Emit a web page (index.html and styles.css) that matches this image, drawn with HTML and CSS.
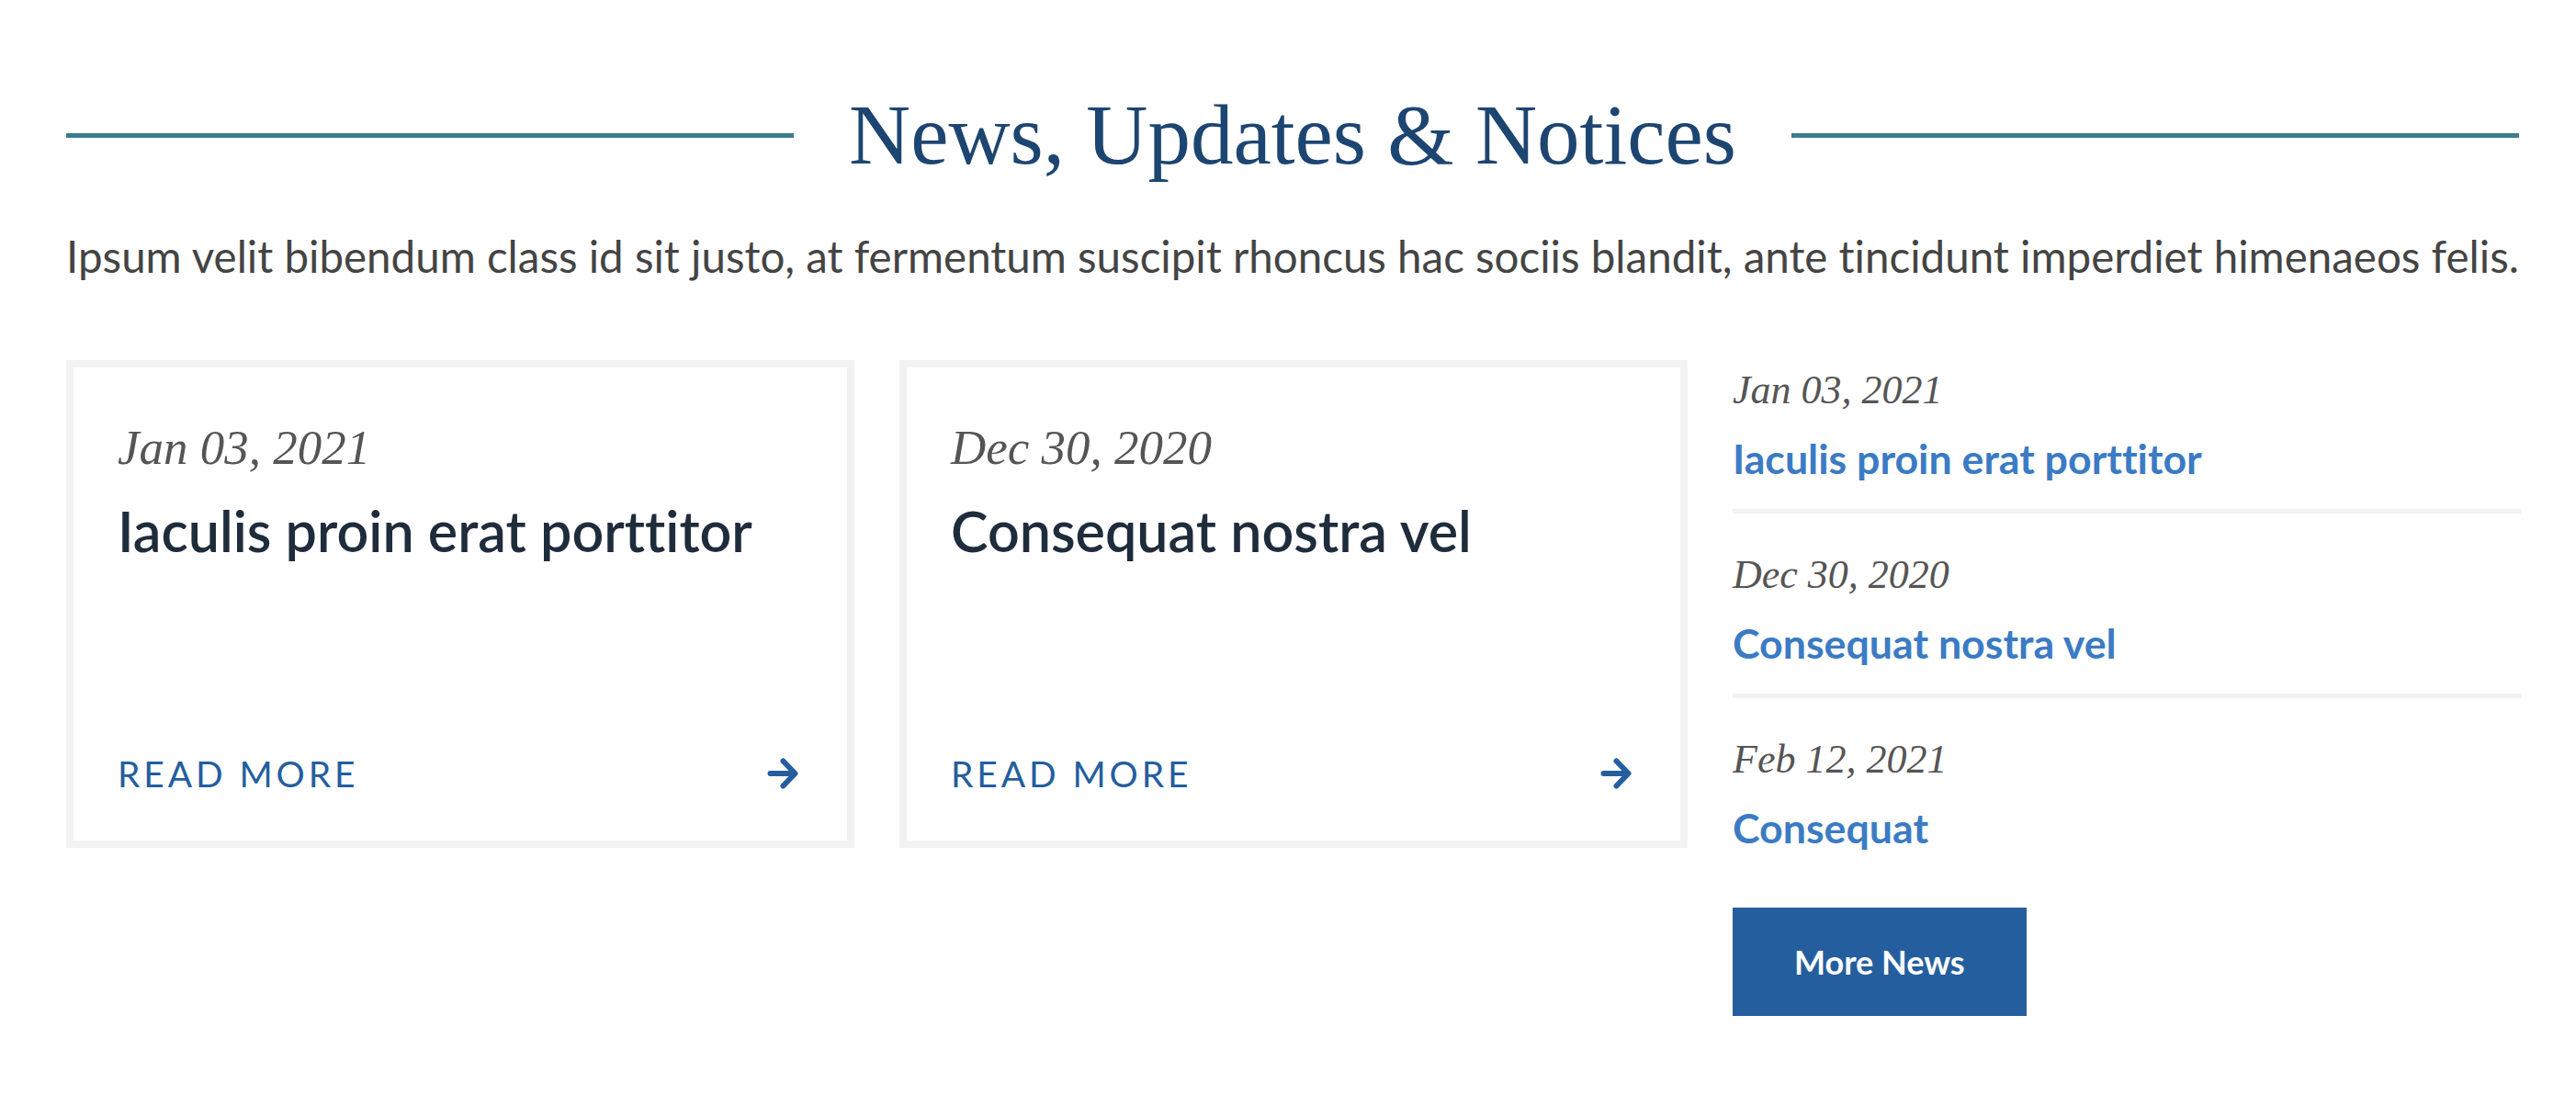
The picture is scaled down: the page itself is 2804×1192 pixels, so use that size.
FILE: index.html
```html
<!DOCTYPE html>
<html lang="en">
<head>
<meta charset="utf-8">
<title>News, Updates &amp; Notices</title>
<link rel="stylesheet" href="styles.css">
</head>
<body>
<section class="news">
  <div class="news-head">
    <span class="rule"></span>
    <h2 class="news-title">News, Updates &amp; Notices</h2>
    <span class="rule"></span>
  </div>
  <p class="lead">Ipsum velit bibendum class id sit justo, at fermentum suscipit rhoncus hac sociis blandit, ante tincidunt imperdiet himenaeos felis.</p>
  <div class="news-grid">
    <article class="card">
      <div class="card-date">Jan 03, 2021</div>
      <h3 class="card-title">Iaculis proin erat porttitor</h3>
      <a class="card-more" href="#">
        <span>READ MORE</span>
        <svg class="arrow" viewBox="0 0 34 34" width="34" height="34" aria-hidden="true"><path d="M3.5 17H30M17.5 3.5L30.5 17L17.5 30.5" fill="none" stroke="currentColor" stroke-width="6" stroke-linecap="round" stroke-linejoin="round"/></svg>
      </a>
    </article>
    <article class="card">
      <div class="card-date">Dec 30, 2020</div>
      <h3 class="card-title">Consequat nostra vel</h3>
      <a class="card-more" href="#">
        <span>READ MORE</span>
        <svg class="arrow" viewBox="0 0 34 34" width="34" height="34" aria-hidden="true"><path d="M3.5 17H30M17.5 3.5L30.5 17L17.5 30.5" fill="none" stroke="currentColor" stroke-width="6" stroke-linecap="round" stroke-linejoin="round"/></svg>
      </a>
    </article>
    <aside class="side">
      <ul class="side-list">
        <li class="side-item">
          <div class="side-date">Jan 03, 2021</div>
          <a class="side-link" href="#">Iaculis proin erat porttitor</a>
        </li>
        <li class="side-item">
          <div class="side-date">Dec 30, 2020</div>
          <a class="side-link" href="#">Consequat nostra vel</a>
        </li>
        <li class="side-item">
          <div class="side-date">Feb 12, 2021</div>
          <a class="side-link" href="#">Consequat</a>
        </li>
      </ul>
      <a class="btn" href="#">More News</a>
    </aside>
  </div>
</section>
</body>
</html>
```
FILE: styles.css
```css
* { box-sizing: border-box; }
html, body { margin: 0; padding: 0; background: #ffffff; }
body {
  font-family: Lato, "Open Sans", sans-serif;
  color: #444444;
  font-variant-ligatures: none;
  font-feature-settings: "liga" 0, "clig" 0;
}

.news { padding: 92px 62px 60px 72px; }

.news-head {
  display: flex;
  align-items: center;
  gap: 60px;
}
.rule {
  flex: 1;
  height: 5px;
  background: #3a7c8d;
}
.news-title {
  margin: 0;
  font-family: "Liberation Serif", "DejaVu Serif", serif;
  font-weight: 400;
  font-size: 93px;
  line-height: 110px;
  color: #1d4571;
  white-space: nowrap;
}

.lead {
  margin: 42px 0 0;
  font-size: 47.5px;
  line-height: 70px;
  color: #444444;
  white-space: nowrap;
}

.news-grid {
  margin-top: 78px;
  display: grid;
  grid-template-columns: 858px 858px 858px;
  column-gap: 49px;
  align-items: start;
}

.card {
  min-height: 531px;
  border: 8px solid #f2f2f2;
  padding: 48px;
  display: flex;
  flex-direction: column;
}
.card-date {
  font-family: "Liberation Serif", "DejaVu Serif", serif;
  font-style: italic;
  font-size: 53px;
  line-height: 78px;
  color: #555555;
}
.card-title {
  margin: 20px 0 0;
  font-size: 61px;
  line-height: 64px;
  font-weight: 600;
  color: #1f2c3b;
}
.card-more {
  margin-top: auto;
  display: flex;
  align-items: center;
  justify-content: space-between;
  height: 50px;
  padding-right: 5px;
  text-decoration: none;
  color: #245e9e;
  font-size: 39px;
  letter-spacing: 0.1em;
}
.arrow { display: block; color: #245e9e; }

.side { display: flex; flex-direction: column; align-items: flex-start; }
.side-list { list-style: none; margin: 0; padding: 0; width: 100%; }
.side-item {
  padding: 0 0 29px;
  border-bottom: 5px solid #f2f2f2;
}
.side-item + .side-item { padding-top: 34px; }
.side-item:last-child { border-bottom: 0; }
.side-date {
  font-family: "Liberation Serif", "DejaVu Serif", serif;
  font-style: italic;
  font-size: 44px;
  line-height: 66px;
  color: #555555;
}
.side-link {
  display: block;
  margin-top: 15px;
  font-size: 44.7px;
  line-height: 52px;
  font-weight: 700;
  color: #3b7bc4;
  text-decoration: none;
}
.btn {
  margin-top: 32px;
  display: flex;
  align-items: center;
  justify-content: center;
  height: 118px;
  padding: 0 67px;
  background: #245e9e;
  color: #ffffff;
  font-size: 36px;
  font-weight: 700;
  text-decoration: none;
}
```
